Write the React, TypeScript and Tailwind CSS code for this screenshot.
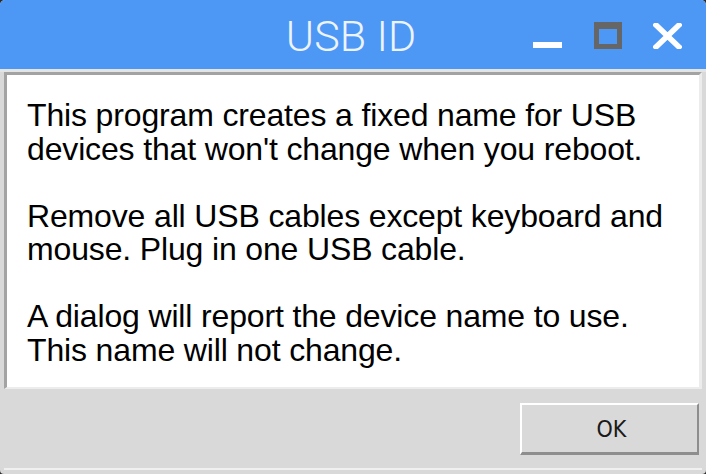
import React from "react";

export default function App() {
  return (
    <div className="w-[706px] h-[474px] bg-[#2a2a2a] overflow-hidden">
      <div className="w-[706px] h-[474px] flex flex-col bg-[#d9d9d9] rounded-t-[5px] rounded-b-[4px] overflow-hidden">
        {/* Title bar */}
        <div className="relative h-[69px] shrink-0 bg-[#4d98f4] flex items-center justify-center">
          <span
            className="text-[43px] leading-none font-light text-[#eef4ff] mt-[4px] ml-[-4px]"
            style={{ fontFamily: "Roboto, 'Noto Sans', sans-serif" }}
          >
            USB ID
          </span>
          {/* minimize */}
          <div className="absolute left-[533px] top-[42px] w-[29px] h-[6px] bg-white" />
          {/* maximize */}
          <div className="absolute left-[594px] top-[22px] w-[28px] h-[27px] border-[#666666] border-t-[7px] border-x-[5px] border-b-[5px] bg-[#4d98f4]" />
          {/* close */}
          <svg className="absolute left-[653px] top-[23px]" width="29" height="26" viewBox="0 0 29 26">
            <path d="M3 2 L26 24 M26 2 L3 24" stroke="white" strokeWidth="5.5" strokeLinecap="square" fill="none" />
          </svg>
        </div>
        {/* Body */}
        <div className="flex-1 flex flex-col border-t-[3px] border-[#e4e4e4] px-[4px] pb-[4px]">
          <div className="h-[317px] bg-white border-t-[3px] border-l-[3px] border-[#a3a3a3] border-r-[3px] border-r-[#ececec] border-b-[2px] border-b-[#ececec]">
            <div
              className="pl-[20px] pt-[24px] text-[32px] leading-[33.5px] tracking-[-0.15px] text-black"
              style={{ fontFamily: "'Liberation Sans', Arial, sans-serif" }}
            >
              <div>This program creates a fixed name for USB</div>
              <div>devices that won't change when you reboot.</div>
              <div className="h-[33.5px]" />
              <div>Remove all USB cables except keyboard and</div>
              <div>mouse. Plug in one USB cable.</div>
              <div className="h-[33.5px]" />
              <div>A dialog will report the device name to use.</div>
              <div>This name will not change.</div>
            </div>
          </div>
          <div className="flex-1 flex justify-end items-start pt-[14px] pr-[3px]">
            <div className="w-[179px] h-[52px] bg-[#d9d9d9] border-t-[2px] border-l-[2px] border-white border-b-[3px] border-r-[2px] border-b-[#8e8e8e] border-r-[#8e8e8e] flex items-center justify-center">
              <span
                className="text-[23px] leading-none text-[#1a1a1a] mt-[1px] ml-[4px]"
                style={{ fontFamily: "'DejaVu Sans Condensed', 'DejaVu Sans', sans-serif" }}
              >
                OK
              </span>
            </div>
          </div>
          <div className="h-[2px] bg-[#f0f0f0]" />
        </div>
      </div>
    </div>
  );
}
